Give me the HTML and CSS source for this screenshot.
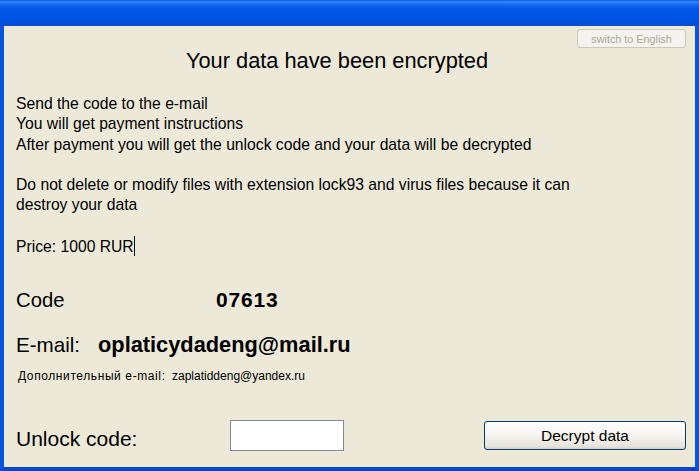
FILE: index.html
```html
<!DOCTYPE html>
<html>
<head>
<meta charset="utf-8">
<link rel="stylesheet" href="styles.css">
</head>
<body>
<div class="window">
  <div class="titlebar"></div>
  <div class="client">
    <div class="top-row">
      <button class="switch-btn" disabled>switch to English</button>
    </div>
    <h1 class="heading">Your data have been encrypted</h1>
    <div class="message">
      <p>Send the code to the e-mail<br>You will get payment instructions<br>After payment you will get the unlock code and your data will be decrypted</p>
      <p>Do not delete or modify files with extension lock93 and virus files because it can<br>destroy your data</p>
      <p>Price: 1000 RUR<span class="caret"></span></p>
    </div>
    <div class="code-row">
      <span class="label code-label">Code</span>
      <span class="code-value">07613</span>
    </div>
    <div class="email-row">
      <span class="label email-label">E-mail:</span>
      <span class="email-value">oplaticydadeng@mail.ru</span>
    </div>
    <div class="extra-row">
      <span class="extra-label">Дополнительный e-mail:</span>
      <span class="extra-email">zaplatiddeng@yandex.ru</span>
    </div>
    <div class="unlock-row">
      <span class="label unlock-label">Unlock code:</span>
      <input class="unlock-input" type="text">
      <button class="decrypt-btn">Decrypt data</button>
    </div>
  </div>
</div>
</body>
</html>
```
FILE: styles.css
```css
html, body {
  margin: 0;
  padding: 0;
  width: 699px;
  height: 471px;
  overflow: hidden;
  font-family: "Liberation Sans", Arial, sans-serif;
}
.window {
  width: 699px;
  height: 471px;
  display: flex;
  flex-direction: column;
}
.titlebar {
  height: 26px;
  flex: none;
  background: linear-gradient(to bottom, #0a5ae6 0px, #2f86f7 2px, #1466f0 5px, #0055e5 10px, #0054e3 18px, #0050dc 23px, #0a4fd4 26px);
}
.client {
  flex: 1;
  background: #ece9d8;
  border-left: 4px solid #0a55e0;
  border-right: 4px solid #0a55e0;
  border-bottom: 4px solid #0846c8;
  display: flex;
  flex-direction: column;
  padding: 0 9px 0 12px;
  color: #000;
}
.top-row {
  display: flex;
  justify-content: flex-end;
  padding-top: 3px;
}
.switch-btn {
  width: 109px;
  height: 19px;
  font-family: "Liberation Sans", Arial, sans-serif;
  font-size: 10.8px;
  color: #aca899;
  background: #f4f3ee;
  border: 1px solid #cac8bb;
  border-radius: 3px;
  padding: 0;
}
.heading {
  margin: 0;
  font-weight: normal;
  font-size: 21.8px;
  line-height: 26px;
  text-align: center;
  padding-right: 28px;
}
.message {
  margin-top: 20px;
  font-size: 15.7px;
  line-height: 20.3px;
}
.message p {
  margin: 0 0 20.3px;
}
.message p:last-child {
  margin-bottom: 0;
}
.caret {
  display: inline-block;
  width: 1px;
  height: 20px;
  background: #000;
  vertical-align: -4px;
}
.label {
  font-size: 20.3px;
}
.code-row {
  margin-top: 31px;
  display: flex;
  align-items: baseline;
  height: 24px;
}
.code-label {
  width: 200px;
}
.code-value {
  font-size: 21px;
  font-weight: bold;
  letter-spacing: 0.8px;
}
.email-row {
  margin-top: 20px;
  display: flex;
  align-items: baseline;
  height: 24px;
}
.email-label {
  width: 82px;
  font-size: 20.6px;
}
.email-value {
  font-size: 21.8px;
  font-weight: bold;
}
.extra-row {
  margin-top: 13px;
  padding-left: 2px;
  font-size: 12px;
  line-height: 15px;
  display: flex;
}
.extra-label {
  letter-spacing: 0.6px;
  width: 154px;
}
.unlock-row {
  margin-top: 36px;
  display: flex;
  align-items: center;
}
.unlock-label {
  width: 214px;
  font-size: 21px;
  padding-top: 6px;
}
.unlock-input {
  width: 114px;
  height: 31px;
  box-sizing: border-box;
  border: 1px solid #7f8c95;
  background: #fff;
  padding: 0;
  margin: 0;
}
.decrypt-btn {
  margin-left: auto;
  width: 202px;
  height: 29px;
  font-family: "Liberation Sans", Arial, sans-serif;
  font-size: 15.5px;
  color: #000;
  border: 1px solid #003c74;
  border-radius: 3px;
  background: linear-gradient(to bottom, #ffffff 0%, #f5f4f0 50%, #e6e4da 90%, #d6d0c5 100%);
  padding: 0;
}
```
